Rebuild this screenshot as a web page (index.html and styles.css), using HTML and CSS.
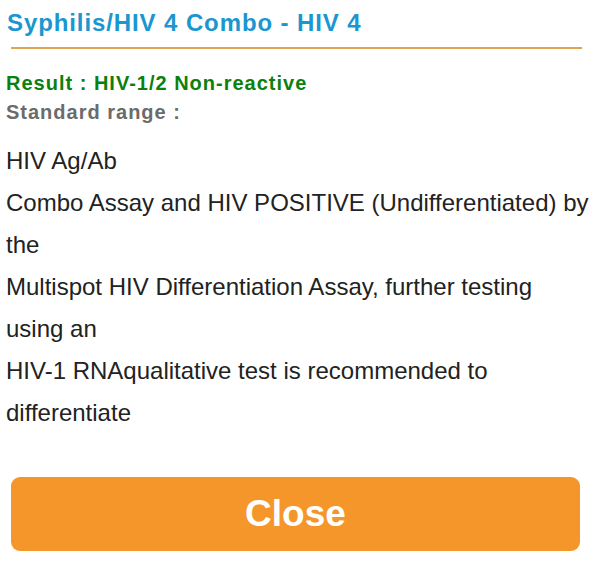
FILE: index.html
```html
<!DOCTYPE html>
<html lang="en">
<head>
    <meta charset="UTF-8">
    <meta name="viewport" content="width=device-width, initial-scale=1.0">
    <title>Test Result</title>
    <link rel="stylesheet" href="styles.css">
</head>
<body>
    <div class="dialog">
        <h1 class="title">Syphilis/HIV 4 Combo - HIV 4</h1>
        <div class="result">Result : HIV-1/2 Non-reactive</div>
        <div class="range-label">Standard range :</div>
        <p class="range-text">HIV Ag/Ab<br>Combo Assay and HIV POSITIVE (Undifferentiated) by the<br>Multispot HIV Differentiation Assay, further testing using an<br>HIV-1 RNAqualitative test is recommended to differentiate</p>
        <button class="close-btn">Close</button>
    </div>
</body>
</html>
```
FILE: styles.css
```css
body {
    margin: 0;
    padding: 0;
    background-color: #ffffff;
    font-family: "Liberation Sans", Arial, sans-serif;
}
.dialog {
    width: 590px;
    padding: 10px 0 0 6px;
    box-sizing: border-box;
}
.title {
    margin: 0 8px 0 5px;
    padding: 0 0 11px;
    font-size: 24px;
    line-height: 26px;
    letter-spacing: 0.9px;
    font-weight: bold;
    color: #1a97cf;
    border-bottom: 2px solid #e0a352;
    text-indent: -4px;
}
.result {
    margin-top: 22px;
    font-size: 20px;
    line-height: 24px;
    letter-spacing: 1px;
    font-weight: bold;
    color: #0c800c;
}
.range-label {
    margin-top: 5px;
    font-size: 20px;
    line-height: 24px;
    letter-spacing: 1px;
    font-weight: bold;
    color: #6b6b6b;
}
.range-text {
    margin: 16px 0 0;
    font-size: 24px;
    line-height: 42px;
    color: #222222;
}
.close-btn {
    display: block;
    width: 569px;
    height: 74px;
    margin: 43px 0 0 5px;
    border: none;
    border-radius: 9px;
    background-color: #f5962a;
    color: #ffffff;
    font-family: "Liberation Sans", Arial, sans-serif;
    font-size: 37px;
    font-weight: bold;
    cursor: pointer;
}
```
